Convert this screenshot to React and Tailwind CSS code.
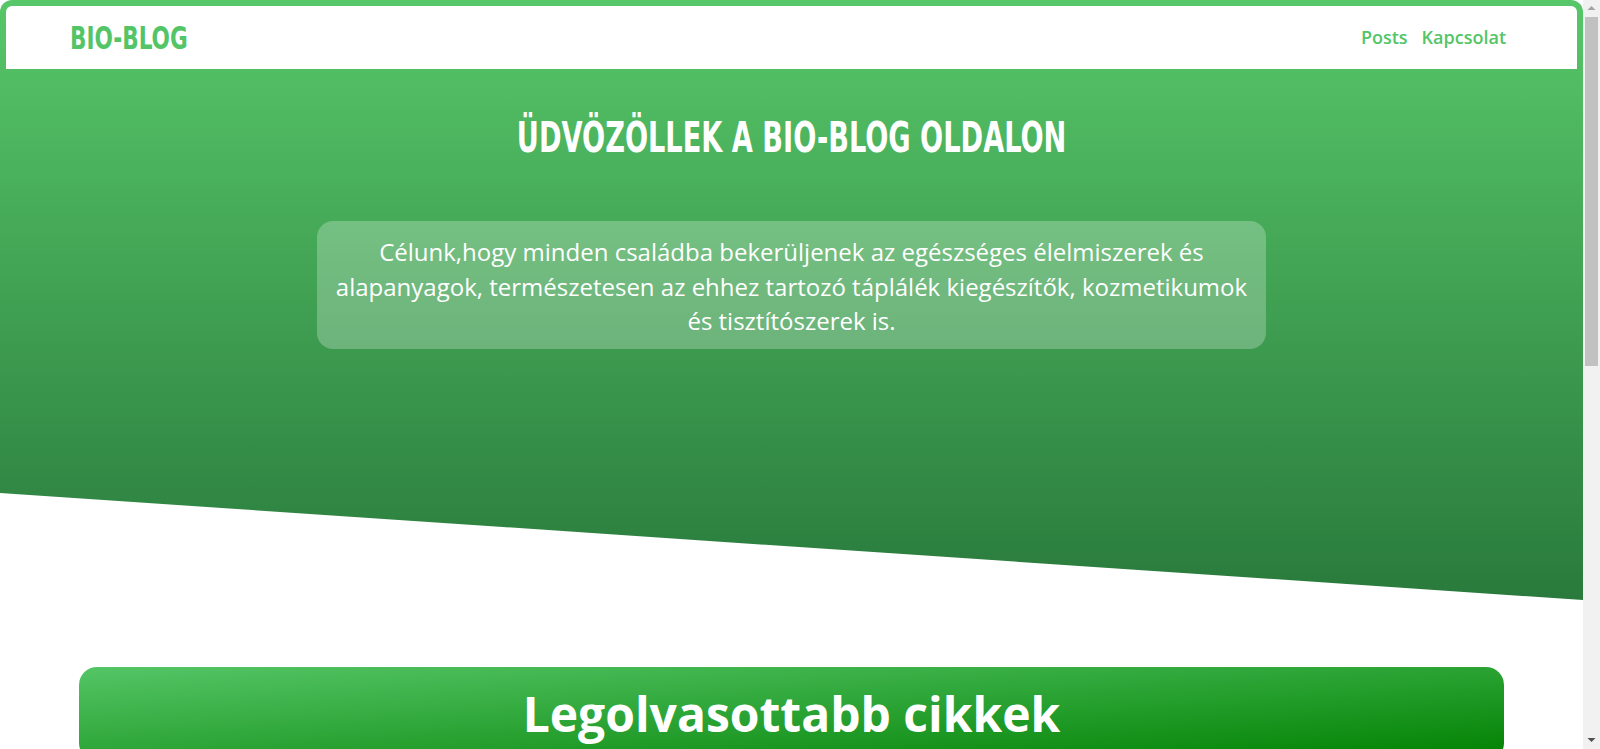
import React from "react";

const navLinks = ["Posts", "Kapcsolat"];

const introLines = [
  "Célunk,hogy minden családba bekerüljenek az egészséges élelmiszerek és",
  "alapanyagok, természetesen az ehhez tartozó táplálék kiegészítők, kozmetikumok",
  "és tisztítószerek is.",
];

function Navbar() {
  return (
    <nav className="mx-[6px] flex h-[63px] items-center justify-between rounded-t-[6px] bg-white px-16">
      <a
        href="#"
        className="inline-block origin-left scale-x-[0.75] font-['Liberation_Sans_Narrow','DejaVu_Sans',sans-serif] text-[32px] font-bold leading-none text-[#53c566] font-stretch-condensed"
      >
        BIO-BLOG
      </a>
      <ul className="flex items-center">
        {navLinks.map((link) => (
          <li key={link}>
            <a
              href="#"
              className="px-[7px] font-['Open_Sans',sans-serif] text-[18px] font-semibold text-[#53c566]"
            >
              {link}
            </a>
          </li>
        ))}
      </ul>
    </nav>
  );
}

function Hero() {
  return (
    <header className="h-[600px] rounded-t-[12px] bg-[linear-gradient(180deg,#57c769,#297a3c)] pt-[6px] [clip-path:polygon(0_0,100%_0,100%_100%,0_calc(100%-107px))]">
      <Navbar />

      {/* welcome */}
      <div className="mt-[48px] text-center">
        <h1 className="inline-block scale-x-[0.72] font-['Liberation_Sans_Narrow','DejaVu_Sans',sans-serif] text-[42px] font-bold leading-none text-white uppercase font-stretch-condensed">
          Üdvözöllek a Bio-Blog oldalon
        </h1>
      </div>

      <div className="mx-auto mt-[62px] w-[60%] rounded-[16px] bg-white/25 px-[8px] pt-[14px] pb-[10px]">
        <p className="text-center font-['Open_Sans',sans-serif] text-[24px] leading-[34.5px] text-white">
          {introLines.map((line, i) => (
            <span key={i} className="block whitespace-nowrap">
              {line}
            </span>
          ))}
        </p>
      </div>
    </header>
  );
}

// drawn copy of the browser's scrollbar
function Scrollbar() {
  return (
    <div className="flex h-full w-[17px] shrink-0 flex-col bg-[#f1f1f1]">
      <svg width="17" height="17" viewBox="0 0 17 17" className="shrink-0">
        <polygon points="4.5,10 12.5,10 8.5,6" fill="#a3a3a3" />
      </svg>
      <div className="mx-[2px] h-[349px] bg-[#c1c1c1]"></div>
      <div className="flex-1"></div>
      <svg width="17" height="17" viewBox="0 0 17 17" className="shrink-0">
        <polygon points="4.5,6 12.5,6 8.5,10" fill="#505050" />
      </svg>
    </div>
  );
}

export default function App() {
  return (
    <div className="flex h-screen bg-white">
      <main className="flex-1 overflow-y-auto [scrollbar-width:none]">
        <Hero />

        <section className="mx-auto mt-[67px] mb-16 w-[90%] rounded-[18px] bg-[linear-gradient(to_bottom_right,#54c566,#008000)] py-[15px]">
          <h2 className="text-center font-['Open_Sans',sans-serif] text-[48px] font-bold leading-[64px] text-white">
            Legolvasottabb cikkek
          </h2>
        </section>
      </main>
      <Scrollbar />
    </div>
  );
}
